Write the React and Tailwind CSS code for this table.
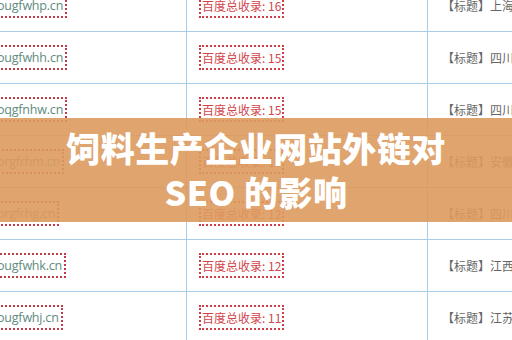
const rows = [
  { domain: "ougfwhp.cn", count: 16, title: "【标题】上海市饲料" },
  { domain: "ougfwhh.cn", count: 15, title: "【标题】四川饲料" },
  { domain: "oqgfnhw.cn", count: 15, title: "【标题】四川饲料" },
  { domain: "orgfrhm.cn", count: 13, title: "【标题】安徽饲料" },
  { domain: "orgfrhg.cn", count: 12, title: "【标题】四川饲料" },
  { domain: "ougfwhk.cn", count: 12, title: "【标题】江西饲料" },
  { domain: "ougfwhj.cn", count: 11, title: "【标题】江苏饲料" },
];

const cjk = { fontFamily: '"Noto Sans CJK SC", "Noto Sans", sans-serif' };

const App = () => {
  return (
    <div className="relative w-[512px] h-[340px] overflow-hidden bg-white">
      <div className="-mt-[21px]">
        {rows.map((row) => (
          <div key={row.domain} className="flex h-[52px] border-t border-[#a9cde6]">
            <div className="w-[186px] flex items-center">
              <span
                className="-ml-[7px] border-2 border-dotted border-[#c23a48] px-[2px] leading-[21px] text-[12.5px] tracking-[-0.2px] text-[#5e8b7e]"
                style={{ fontFamily: '"Open Sans", "Noto Sans", sans-serif' }}
              >
                {row.domain}
              </span>
            </div>
            <div className="w-[241px] flex items-center border-l border-[#a9cde6] pl-[12px]">
              <span
                className="border-2 border-dotted border-[#cf3c44] px-[1px] leading-[21px] text-[12px] text-[#d2454a]"
                style={cjk}
              >
                百度总收录: {row.count}
              </span>
            </div>
            <div
              className="flex-1 flex items-center border-l border-[#a9cde6] pl-[14px] whitespace-nowrap overflow-hidden text-[12px] text-[#666]"
              style={cjk}
            >
              {row.title}
            </div>
          </div>
        ))}
      </div>

      <div className="absolute left-0 right-0 top-[118px] h-[104px] bg-[#dd9a5e]/90 flex flex-col items-center justify-center">
        <h1
          className="text-white text-[34px] leading-[44px] font-black text-center tracking-[0.5px]"
          style={cjk}
        >
          饲料生产企业网站外链对
          <br />
          SEO 的影响
        </h1>
      </div>
    </div>
  );
};

export default App;
